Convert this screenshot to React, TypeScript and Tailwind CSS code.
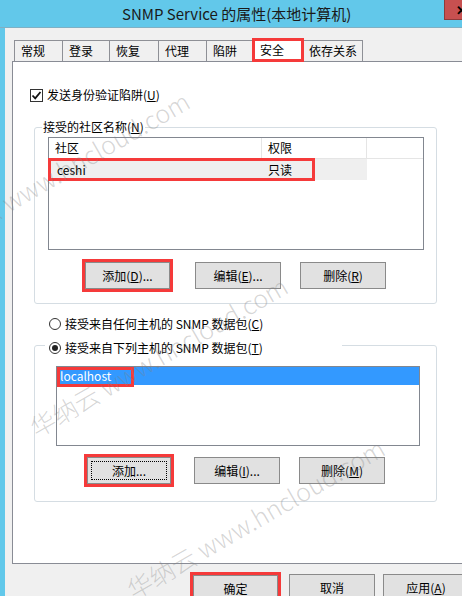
import React from 'react';

const tabs = [
  { label: '常规', w: 'w-[49px]' },
  { label: '登录', w: 'w-[48px]' },
  { label: '恢复', w: 'w-[50px]' },
  { label: '代理', w: 'w-[49px]' },
  { label: '陷阱', w: 'w-[48px]' },
  { label: '安全', w: 'w-[50px]', active: true },
  { label: '依存关系', w: 'w-[61px]' },
];

const Btn = ({ children, className = '' }: { children: React.ReactNode; className?: string }) => (
  <div
    className={`h-[27px] shrink-0 flex items-center justify-center bg-[#e1e1e1] border border-[#8a8a8a] text-[12px] leading-[16px] text-black ${className}`}
  >
    {children}
  </div>
);

const Mark = ({ className }: { className: string }) => (
  <div
    className={`absolute whitespace-nowrap origin-[0_100%] -rotate-30 text-[25px] leading-[25px] font-light text-[rgba(130,130,130,0.32)] pointer-events-none ${className}`}
  >
    华纳云 www.hncloud.com
  </div>
);

const App = () => {
  return (
    <div className="relative w-[462px] h-[596px] overflow-hidden bg-[#62c8ea] flex flex-col font-['Noto_Sans_CJK_SC',sans-serif] text-black">
      {/* title bar */}
      <div className="relative h-[28px] shrink-0 border-b border-[#7fb0c4]">
        <div className="pl-[122px] pt-[4px] text-[15px] leading-[20px] text-[#1a1a1a] whitespace-nowrap">
          SNMP Service 的属性(本地计算机)
        </div>
        <div className="absolute left-[444px] top-0 w-[34px] h-[20px] bg-[#c75050] border-l border-b border-[#8e3b3b] flex items-center justify-center text-[13px] font-bold leading-none text-black">
          ✕
        </div>
      </div>

      {/* client */}
      <div className="flex-1 ml-[5px] bg-[#f0f0f0] pl-[7px] pt-[10px] flex flex-col">
        {/* tabs */}
        <div className="h-[23px] flex items-end ml-[2px] shrink-0">
          {tabs.map((t, i) => (
            <div
              key={t.label}
              className={`${t.w} ${i > 0 ? '-ml-px' : ''} ${
                t.active
                  ? 'relative z-10 h-[24px] -mb-px bg-white border-t border-x border-[#898c95] pt-[3px]'
                  : 'h-[21px] bg-[#f0f0f0] border-t border-x border-[#8e9096] pt-[2px]'
              } pl-[6px] text-[12px] leading-[16px] whitespace-nowrap`}
            >
              {t.label}
              {t.active && (
                <div className="absolute -left-[2px] -right-[2px] -top-[1px] bottom-0 border-[3px] border-[#f53a3a]"></div>
              )}
            </div>
          ))}
        </div>

        {/* panel */}
        <div className="w-[470px] h-[503px] shrink-0 bg-white border border-[#898c95] flex flex-col">
          {/* checkbox */}
          <div className="mt-[25px] ml-[17px] h-[16px] flex items-center">
            <div className="w-[13px] h-[13px] border border-[#333] bg-white flex items-center justify-center">
              <svg width="11" height="11" viewBox="0 0 11 11">
                <path d="M1.5 5.5 L4.2 8.3 L9.5 2" fill="none" stroke="#111" strokeWidth="1.8" />
              </svg>
            </div>
            <span className="ml-[4px] text-[12px] leading-[16px] whitespace-nowrap">
              发送身份验证陷阱(<span className="underline">U</span>)
            </span>
          </div>

          {/* group 1 */}
          <div className="mt-[24px] ml-[21px] w-[403px] h-[177px] border border-[#d5dde3] rounded-[3px] flex flex-col">
            <div className="-mt-[9px] ml-[7px] px-[1px] bg-white w-fit text-[12px] leading-[16px] whitespace-nowrap">
              接受的社区名称(<span className="underline">N</span>)
            </div>
            <div className="mt-[2px] ml-[13px] w-[376px] h-[113px] border border-[#828790] bg-white flex flex-col">
              <div className="flex h-[21px] text-[12px] leading-[16px]">
                <div className="w-[213px] border-r border-b border-[#e5e5e5] pl-[6px] pt-[2px]">社区</div>
                <div className="w-[105px] border-r border-b border-[#e5e5e5] pl-[6px] pt-[2px]">权限</div>
                <div className="flex-1 border-b border-[#e5e5e5]"></div>
              </div>
              <div className="relative flex h-[21px] text-[12px] leading-[16px]">
                <div className="w-[213px] bg-[#efefef] pl-[8px] pt-[3px]">ceshi</div>
                <div className="w-[105px] bg-[#efefef] pl-[6px] pt-[3px]">只读</div>
                <div className="absolute -left-[1px] -top-[1px] w-[267px] h-[23px] border-[3px] border-[#f53a3a]"></div>
              </div>
            </div>
            <div className="mt-[12px] flex">
              <div className="relative ml-[50px]">
                <Btn className="w-[85px]">
                  添加(<span className="underline">D</span>)...
                </Btn>
                <div className="absolute -inset-[3px] border-[3px] border-[#f53a3a]"></div>
              </div>
              <Btn className="ml-[25px] w-[86px]">
                编辑(<span className="underline">E</span>)...
              </Btn>
              <Btn className="ml-[19px] w-[86px]">
                删除(<span className="underline">R</span>)
              </Btn>
            </div>
          </div>

          {/* radio 1 */}
          <div className="mt-[12px] ml-[36px] h-[16px] flex items-center">
            <div className="w-[12px] h-[12px] rounded-full border border-[#333] bg-white"></div>
            <span className="ml-[4px] text-[12px] leading-[16px] whitespace-nowrap">
              接受来自任何主机的 SNMP 数据包(<span className="underline">C</span>)
            </span>
          </div>

          {/* group 2 */}
          <div className="mt-[13px] ml-[21px] w-[403px] h-[157px] border border-[#d5dde3] rounded-[3px] flex flex-col">
            <div className="-mt-[6px] ml-[10px] pl-[4px] w-[297px] h-[16px] bg-white flex items-center">
              <div className="w-[12px] h-[12px] rounded-full border border-[#333] bg-white flex items-center justify-center">
                <div className="w-[6px] h-[6px] rounded-full bg-[#222]"></div>
              </div>
              <span className="ml-[4px] text-[12px] leading-[16px] whitespace-nowrap">
                接受来自下列主机的 SNMP 数据包(<span className="underline">T</span>)
              </span>
            </div>
            <div className="mt-[10px] ml-[21px] w-[364px] h-[80px] border border-[#828790] bg-white flex flex-col">
              <div className="relative h-[18px] bg-[#3399ff] text-white text-[12px] leading-[16px] pl-[3px] pt-[1px]">
                localhost
                <div className="absolute left-0 top-0 w-[77px] h-[20px] border-[3px] border-[#f53a3a]"></div>
              </div>
            </div>
            <div className="mt-[11px] flex">
              <div className="relative ml-[52px]">
                <Btn className="w-[84px] border-[#3c7fb1]">
                  <div className="w-[76px] h-[19px] border border-dotted border-black flex items-center justify-center">
                    添加...
                  </div>
                </Btn>
                <div className="absolute -inset-[3px] border-[3px] border-[#f53a3a]"></div>
              </div>
              <Btn className="ml-[23px] w-[86px]">
                编辑(<span className="underline">I</span>)...
              </Btn>
              <Btn className="ml-[19px] w-[86px]">
                删除(<span className="underline">M</span>)
              </Btn>
            </div>
          </div>
        </div>

        {/* bottom buttons */}
        <div className="mt-[11px] flex">
          <div className="relative ml-[181px]">
            <Btn className="w-[85px]">确定</Btn>
            <div className="absolute -inset-[3px] border-[3px] border-[#f53a3a]"></div>
          </div>
          <Btn className="ml-[11px] -mt-[1px] w-[86px]">取消</Btn>
          <Btn className="ml-[8px] -mt-[1px] w-[86px]">
            应用(<span className="underline">A</span>)
          </Btn>
        </div>
      </div>

      {/* watermarks */}
      <Mark className="left-[-60px] top-[230px]" />
      <Mark className="left-[38px] top-[415px]" />
      <Mark className="left-[135px] top-[577px]" />
    </div>
  );
};

export default App;
